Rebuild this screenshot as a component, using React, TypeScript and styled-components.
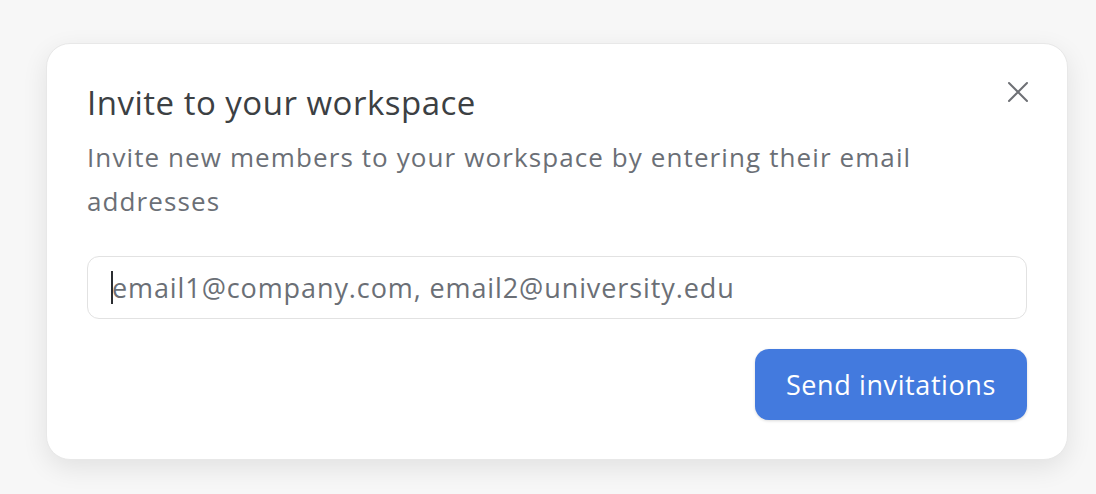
import React from "react"
import styled, { createGlobalStyle } from "styled-components"

const GlobalStyle = createGlobalStyle`
  html, body {
    margin: 0;
    padding: 0;
    background: #f7f7f7;
    font-family: "Open Sans", "Noto Sans", sans-serif;
  }
`

const Page = styled.div`
  width: 1096px;
  height: 494px;
  box-sizing: border-box;
  padding: 43px 28px 0 46px;
`

const Card = styled.div`
  position: relative;
  box-sizing: border-box;
  width: 1022px;
  height: 417px;
  background: #fff;
  border: 1px solid #e8e8e8;
  border-radius: 24px;
  box-shadow: 0 8px 26px rgba(0, 0, 0, 0.09);
  padding: 37px 40px 0 40px;
  display: flex;
  flex-direction: column;
`

const Title = styled.h2`
  margin: 0;
  font-size: 33px;
  line-height: 44px;
  font-weight: 400;
  letter-spacing: 0.5px;
  color: #3c4043;
`

const Description = styled.p`
  margin: 10px 0 0 0;
  font-size: 26px;
  line-height: 44px;
  letter-spacing: 1.1px;
  color: #6b6f76;
  max-width: 870px;
`

const InputWrap = styled.div`
  position: relative;
  margin-top: 33px;
`

const EmailInput = styled.input`
  box-sizing: border-box;
  display: block;
  width: 100%;
  height: 63px;
  border: 1px solid #e2e2e2;
  border-radius: 12px;
  padding: 0 24px;
  font-family: inherit;
  font-size: 27px;
  letter-spacing: 0.9px;
  color: #3c4043;
  outline: none;
  caret-color: transparent;
  &::placeholder {
    color: #6b6f76;
  }
`

const Caret = styled.span`
  position: absolute;
  left: 24px;
  top: 15px;
  width: 2px;
  height: 33px;
  background: #2b2d31;
  pointer-events: none;
`

const Actions = styled.div`
  display: flex;
  justify-content: flex-end;
  margin-top: 30px;
`

const PrimaryButton = styled.button`
  height: 71px;
  padding: 0 31px;
  border: none;
  border-radius: 14px;
  background: #437ade;
  color: #fff;
  font-family: inherit;
  font-size: 27px;
  letter-spacing: 0.6px;
  box-shadow: 0 1px 3px rgba(0, 0, 0, 0.15);
  cursor: pointer;
`

const CloseButton = styled.button`
  position: absolute;
  top: 33px;
  right: 34px;
  width: 30px;
  height: 30px;
  padding: 0;
  border: none;
  background: none;
  display: flex;
  align-items: center;
  justify-content: center;
  cursor: pointer;
`

const CloseIcon = () => (
  <svg width="22" height="22" viewBox="0 0 22 22" fill="none">
    <path d="M2 2L20 20M20 2L2 20" stroke="#6e7075" strokeWidth="2" strokeLinecap="round" />
  </svg>
)

export default function App() {
  return (
    <>
      <GlobalStyle />
      <Page>
        <Card>
          <CloseButton aria-label="Close"><CloseIcon /></CloseButton>
          <Title>Invite to your workspace</Title>
          <Description>
            Invite new members to your workspace by entering their email addresses
          </Description>
          <InputWrap>
            <EmailInput placeholder="email1@company.com, email2@university.edu" />
            <Caret />
          </InputWrap>
          <Actions>
            <PrimaryButton>Send invitations</PrimaryButton>
          </Actions>
        </Card>
      </Page>
    </>
  )
}
